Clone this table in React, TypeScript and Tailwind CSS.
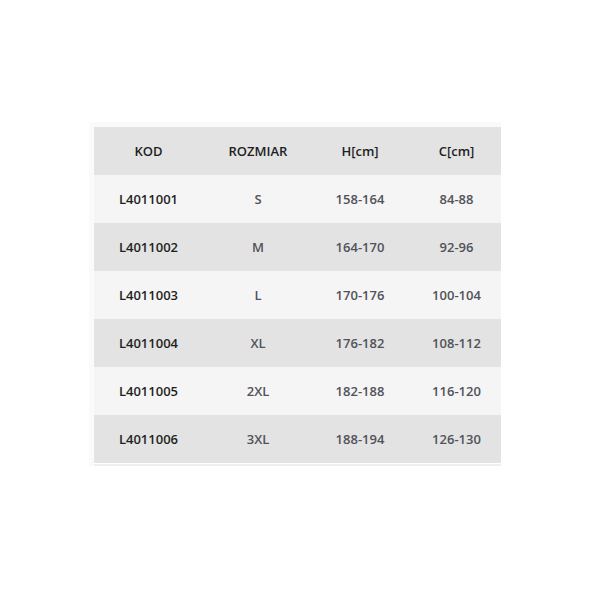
const rows = [
  ["L4011001", "S", "158-164", "84-88"],
  ["L4011002", "M", "164-170", "92-96"],
  ["L4011003", "L", "170-176", "100-104"],
  ["L4011004", "XL", "176-182", "108-112"],
  ["L4011005", "2XL", "182-188", "116-120"],
  ["L4011006", "3XL", "188-194", "126-130"],
];

const cols = "grid grid-cols-[109px_110px_94px_99px]";

export default function App() {
  return (
    <div className="h-[590px] w-[590px] bg-white pt-[122px] pl-[89px] font-['Open_Sans',sans-serif] text-[13px] font-semibold">
      <div className="w-[412px] overflow-hidden bg-[#fafafa] pt-[5px] pl-[5px]">
        <div className="w-[412px]">
          <div className={`${cols} h-[48px] items-center bg-[#e3e3e3] pt-[2px] text-center text-[#1f1f1f]`}>
            <div>KOD</div>
            <div>ROZMIAR</div>
            <div>H[cm]</div>
            <div>C[cm]</div>
          </div>
          {rows.map((r, i) => (
            <div
              key={r[0]}
              className={`${cols} h-[48px] items-center pt-[2px] text-center text-[#52525a] ${
                i % 2 === 0 ? "bg-[#f5f5f5]" : "bg-[#e3e3e3]"
              }`}
            >
              <div className="text-[#1f1f1f]">{r[0]}</div>
              <div>{r[1]}</div>
              <div>{r[2]}</div>
              <div>{r[3]}</div>
            </div>
          ))}
        </div>
        <div className="h-[1px] bg-white" />
        <div className="h-[2px] bg-[#efefef]" />
      </div>
    </div>
  );
}
